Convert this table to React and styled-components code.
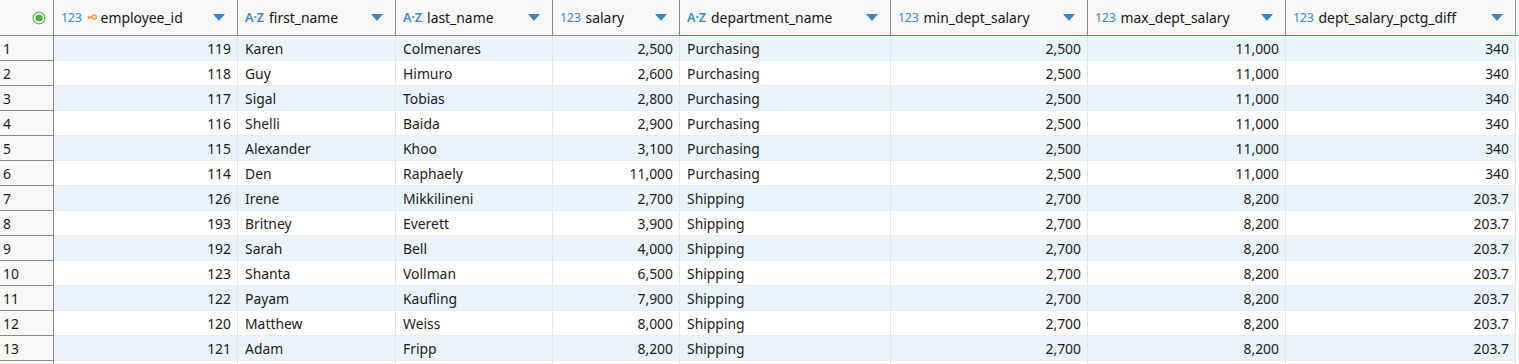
import React from "react";
import styled, { createGlobalStyle } from "styled-components";

const GlobalStyle = createGlobalStyle`
  html, body {
    margin: 0;
    padding: 0;
    overflow: hidden;
    background: #ffffff;
  }
  body {
    font-family: "Noto Sans", "Open Sans", sans-serif;
    font-size: 13.9px;
    color: #1b1b1b;
  }
`;

const columns = [
  { key: "employee_id", type: "num", width: 184, pk: true },
  { key: "first_name", type: "str", width: 158 },
  { key: "last_name", type: "str", width: 157 },
  { key: "salary", type: "num", width: 127 },
  { key: "department_name", type: "str", width: 211, marked: true },
  { key: "min_dept_salary", type: "num", width: 197, marked: true },
  { key: "max_dept_salary", type: "num", width: 198, marked: true },
  { key: "dept_salary_pctg_diff", type: "num", width: 230, marked: true },
];

const P = ["2,500", "11,000", "340"];
const S = ["2,700", "8,200", "203.7"];

const rows = [
  ["119", "Karen", "Colmenares", "2,500", "Purchasing", ...P],
  ["118", "Guy", "Himuro", "2,600", "Purchasing", ...P],
  ["117", "Sigal", "Tobias", "2,800", "Purchasing", ...P],
  ["116", "Shelli", "Baida", "2,900", "Purchasing", ...P],
  ["115", "Alexander", "Khoo", "3,100", "Purchasing", ...P],
  ["114", "Den", "Raphaely", "11,000", "Purchasing", ...P],
  ["126", "Irene", "Mikkilineni", "2,700", "Shipping", ...S],
  ["193", "Britney", "Everett", "3,900", "Shipping", ...S],
  ["192", "Sarah", "Bell", "4,000", "Shipping", ...S],
  ["123", "Shanta", "Vollman", "6,500", "Shipping", ...S],
  ["122", "Payam", "Kaufling", "7,900", "Shipping", ...S],
  ["120", "Matthew", "Weiss", "8,000", "Shipping", ...S],
  ["121", "Adam", "Fripp", "8,200", "Shipping", ...S],
];

const template = `54px ${columns.map((c) => c.width + "px").join(" ")} 1fr`;

const Grid = styled.div`
  display: grid;
  grid-template-columns: ${template};
  width: 1519px;
`;

const HeadCorner = styled.div`
  height: 36px;
  box-sizing: border-box;
  background: #f8f8f8;
  border-right: 1px solid #8a8a8a;
  border-bottom: 1px solid #8a8a8a;
  display: flex;
  align-items: center;
  justify-content: flex-end;
  padding-right: 7px;
`;

const HeadCell = styled.div`
  height: 36px;
  box-sizing: border-box;
  background: #f8f8f8;
  border-right: 1px solid #8a8a8a;
  border-bottom: 1px solid ${(p) => (p.$marked ? "#e0563f" : "#8a8a8a")};
  display: flex;
  align-items: center;
  padding: 0 7px 0 7px;
  gap: 4px;
  white-space: nowrap;
  overflow: hidden;
`;

const HeadFill = styled.div`
  height: 36px;
  box-sizing: border-box;
  background: #f8f8f8;
  border-bottom: 1px solid #8a8a8a;
`;

const TypeTag = styled.span`
  color: #3489d2;
  font-family: "Noto Sans", sans-serif;
  font-size: 12.5px;
  letter-spacing: ${(p) => (p.$str ? "0" : "-0.3px")};
  font-weight: ${(p) => (p.$str ? 600 : 400)};
  margin-right: 1px;
`;

const Title = styled.span`
  color: #151515;
  flex: 1;
`;

const Arrow = styled.span`
  width: 0;
  height: 0;
  border-left: 6px solid transparent;
  border-right: 6px solid transparent;
  border-top: 7px solid #3b86c7;
  margin-right: 5px;
`;

const RowNum = styled.div`
  height: 25px;
  box-sizing: border-box;
  background: #f8f8f8;
  border-right: 1px solid #8a8a8a;
  border-bottom: 1px solid #8a8a8a;
  display: flex;
  align-items: center;
  padding-left: 3px;
`;

const Cell = styled.div`
  height: 25px;
  box-sizing: border-box;
  background: ${(p) => (p.$odd ? "#eaf4fe" : "#ffffff")};
  border-right: 1px solid #e6e6e6;
  border-bottom: 1px solid #ececec;
  display: flex;
  align-items: center;
  justify-content: ${(p) => (p.$num ? "flex-end" : "flex-start")};
  padding: 0 6px 0 7px;
  white-space: nowrap;
  overflow: hidden;
`;

const Fill = styled.div`
  height: 25px;
  box-sizing: border-box;
  background: #ffffff;
`;

function Radio() {
  return (
    <svg width="14" height="14" viewBox="0 0 14 14">
      <circle cx="7" cy="7" r="5.8" fill="none" stroke="#5cb85c" strokeWidth="1.3" />
      <circle cx="7" cy="7" r="3.6" fill="#4caf50" />
    </svg>
  );
}

function KeyIcon() {
  return (
    <svg width="10" height="7" viewBox="0 0 10 7">
      <circle cx="7.2" cy="3" r="2" fill="none" stroke="#f0a030" strokeWidth="1.4" />
      <path d="M0.5 3 H5.2 M1.5 3 V5 M3 3 V4.6" stroke="#f0a030" strokeWidth="1.3" fill="none" />
    </svg>
  );
}

export default function App() {
  return (
    <>
      <GlobalStyle />
      <Grid>
        <HeadCorner>
          <Radio />
        </HeadCorner>
        {columns.map((c) => (
          <HeadCell key={c.key} $marked={c.marked}>
            <TypeTag $str={c.type === "str"}>{c.type === "num" ? "123" : "A·Z"}</TypeTag>
            {c.pk && <KeyIcon />}
            <Title>{c.key}</Title>
            <Arrow />
          </HeadCell>
        ))}
        <HeadFill />
        {rows.map((r, i) => (
          <React.Fragment key={i}>
            <RowNum>{i + 1}</RowNum>
            {r.map((v, j) => (
              <Cell key={j} $odd={i % 2 === 0} $num={columns[j].type === "num"}>
                {v}
              </Cell>
            ))}
            <Fill />
          </React.Fragment>
        ))}
        <RowNum />
        {columns.map((c) => (
          <Cell key={c.key} />
        ))}
        <Fill />
      </Grid>
    </>
  );
}
